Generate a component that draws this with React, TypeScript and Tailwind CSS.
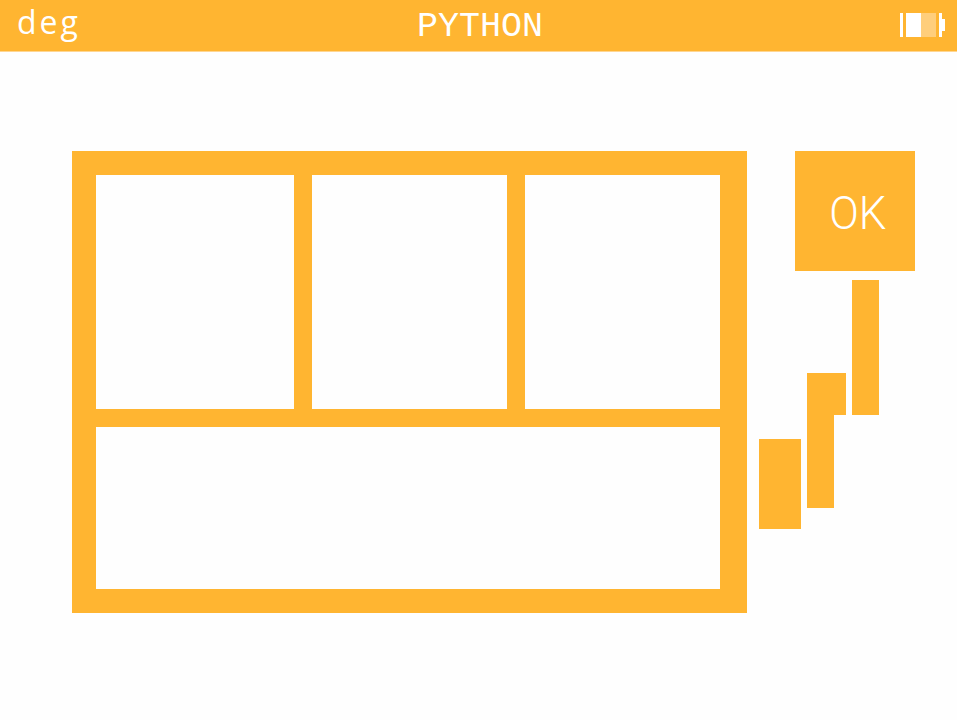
const AMBER = 'bg-[#ffb531]';

function Battery() {
  return (
    <div className="flex h-6 items-center">
      <div className="h-6 w-[3px] bg-white" />
      <div className="ml-[3px] h-6 w-[15px] bg-white" />
      <div className="h-6 w-[15px] bg-[#ffce7b]" />
      <div className="ml-[3px] h-6 w-[3px] bg-white" />
      <div className="h-3 w-[3px] bg-white" />
    </div>
  );
}

function StatusBar() {
  return (
    <header className={`${AMBER} grid h-[52px] grid-cols-3 border-b border-[#ffd691] text-white`}>
      <div className="flex h-[51px] pl-[17px] font-['Open_Sans',sans-serif] text-[32px] leading-[44px] tracking-[3px]">
        deg
      </div>
      <div className="pl-[3px] pt-[7px] text-center font-['Liberation_Mono',monospace] text-[35px] leading-[40px]">
        PYTHON
      </div>
      <div className="flex justify-end pr-[12px] pt-[13px]">
        <Battery />
      </div>
    </header>
  );
}

function Panel() {
  return (
    <div className={`${AMBER} flex h-[462px] w-[675px] flex-col gap-[18px] pb-6 pl-6 pr-[27px] pt-6`}>
      <div className="flex h-[234px] gap-[18px]">
        <div className="w-[198px] bg-[#fefefe]" />
        <div className="w-[195px] bg-[#fefefe]" />
        <div className="w-[195px] bg-[#fefefe]" />
      </div>
      <div className="h-[162px] bg-[#fefefe]" />
    </div>
  );
}

function Steps() {
  return (
    <div className="mt-[9px] flex items-start gap-[6px]">
      <div className={`${AMBER} mt-[159px] h-[90px] w-[42px]`} />
      <div className="mt-[93px] w-[39px]">
        <div className={`${AMBER} h-[42px] w-[39px]`} />
        <div className={`${AMBER} h-[93px] w-[27px]`} />
      </div>
      <div className={`${AMBER} h-[135px] w-[27px]`} />
    </div>
  );
}

export default function App() {
  return (
    <main className="h-[720px] w-[957px] overflow-hidden bg-[#fefefe]">
      <StatusBar />
      <div className="flex gap-3 pl-[72px] pt-[99px]">
        <Panel />
        <div>
          <div
            className={`${AMBER} ml-9 flex h-[120px] w-[120px] items-center justify-center pl-[6px] pt-[2px] font-['Roboto',sans-serif] text-[47px] font-light leading-none text-white`}
          >
            <span className="scale-x-[0.93]">OK</span>
          </div>
          <Steps />
        </div>
      </div>
    </main>
  );
}
